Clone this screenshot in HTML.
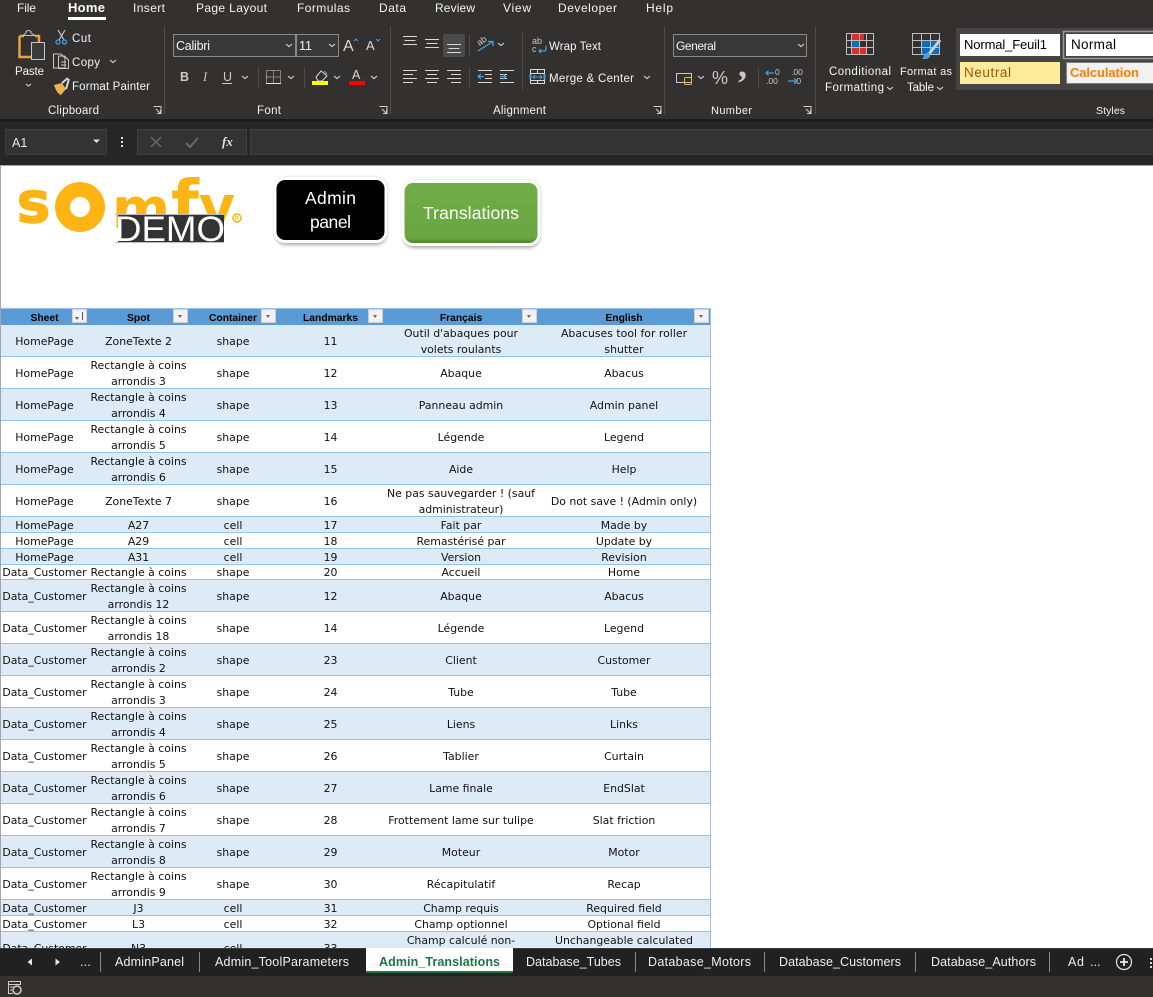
<!DOCTYPE html>
<html lang="en"><head><meta charset="utf-8"><title>Admin_Translations</title>
<style>
html,body{margin:0;padding:0;background:#fff}
#p{position:relative;width:1153px;height:997px;overflow:hidden;background:#fff;font-family:"Liberation Sans",sans-serif}
svg{position:absolute;display:block}
svg text{font-family:"Liberation Sans",sans-serif}
#w{position:absolute;left:0;top:165px;width:1153px;height:783px;overflow:hidden;border-top:1px solid #a6a6a6;box-sizing:border-box;border-left:1px solid #a6a6a6}
table{display:block;position:absolute;left:0;top:142px;width:710px;box-sizing:border-box;border-right:1px solid #9bc2e6;font:10.9px/16px "DejaVu Sans",sans-serif;color:#111}
tbody{display:block}
tr{display:flex}
td,th{display:flex;flex:none;align-items:center;justify-content:center;padding:2px 0 0;text-align:center;overflow:hidden;box-sizing:border-box;box-shadow:inset 0 -1px 0 #9bc2e6;white-space:nowrap}
td:nth-child(1),th:nth-child(1){width:87px}
td:nth-child(2),th:nth-child(2){width:101px}
td:nth-child(3),th:nth-child(3){width:88px}
td:nth-child(4),th:nth-child(4){width:107px}
td:nth-child(5),th:nth-child(5){width:154px}
td:nth-child(6),th:nth-child(6){width:172px}
th{height:17px;background:#5b9bd5;font:bold 10.3px/15px "Liberation Sans",sans-serif;color:#000;position:relative;box-shadow:inset 0 1px 0 #9bc2e6;padding-top:3px}
th b{position:absolute;right:1px;top:1px;width:15px;height:14px;background:#f2f2f2;border:1px solid #d0d0d0;box-sizing:border-box}
th b:after{content:"";position:absolute;left:4px;top:5px;border:2.5px solid transparent;border-top:3px solid #666;border-bottom:0}
th b.s:before{content:"";position:absolute;left:9px;top:2px;width:1px;height:8px;background:#555}
th b.s:after{left:2px;top:7px}
tr.b td{background:#ddebf7}
tr.h32 td{height:32px}tr.h16 td{height:16px}tr.h15 td{height:15px;align-items:flex-start;padding-top:1px;line-height:14px}
</style></head><body><div id="p">

<svg style="left:0;top:0" width="1153" height="165" viewBox="0 0 1153 165">
<rect width="1153" height="165" fill="#262626"/>
<rect width="1153" height="119" fill="#323130"/>
<rect y="119" width="1153" height="3" fill="#1c1c1c"/>
<g fill="#f4f4f4" font-size="12">
<text x="17" y="12" textLength="19">File</text>
<text x="68" y="12" font-size="13" font-weight="bold" fill="#fff" textLength="37">Home</text>
<text x="133" y="12" textLength="32">Insert</text>
<text x="196" y="12" textLength="71">Page Layout</text>
<text x="297" y="12" textLength="53">Formulas</text>
<text x="379" y="12" textLength="27">Data</text>
<text x="435" y="12" textLength="40">Review</text>
<text x="503" y="12" textLength="28">View</text>
<text x="558" y="12" textLength="59">Developer</text>
<text x="646" y="12" textLength="27">Help</text>
</g>
<rect x="68" y="17" width="38" height="3" fill="#fff"/>
<g stroke="#4d4d4d"><path d="M164.500 26V114M390.500 26V114M664.500 26V114M815.500 26V114"/></g>

<!-- clipboard -->
<path d="M19.500 36H24M35 36H39V46" fill="none" stroke="#e8a33b" stroke-width="2.500"/>
<path d="M19.500 36V57H31" fill="none" stroke="#e8a33b" stroke-width="2.500"/>
<path d="M23 35.500L26 33V31.500Q28.500 29.500 31 31.500V33L35 35.500Z" fill="none" stroke="#c8c8c8"/>
<rect x="31.500" y="42.500" width="13" height="17" fill="#3a3a3a" stroke="#c8c8c8"/>
<g fill="#f4f4f4" font-size="11.500">
<text x="15" y="75" textLength="29">Paste</text>
<text x="72" y="42" textLength="19">Cut</text>
<text x="72" y="66" textLength="28">Copy</text>
<text x="72" y="90" textLength="78">Format Painter</text>
<text x="48" y="114" textLength="51">Clipboard</text>
<text x="257" y="114" textLength="24">Font</text>
<text x="493" y="114" textLength="53">Alignment</text>
<text x="711" y="114" font-size="11" textLength="41">Number</text>
<text x="1096" y="114" font-size="10.500" textLength="29">Styles</text>
</g>
<path d="M58 30L64 40M65 30L59 40" stroke="#c8c8c8" stroke-width="1.200" fill="none"/>
<circle cx="58" cy="42" r="2" fill="none" stroke="#4a9fdc" stroke-width="1.300"/><circle cx="64.500" cy="42" r="2" fill="none" stroke="#4a9fdc" stroke-width="1.300"/>
<path d="M59 68H53.500V54H61L65 58V68Z M58.500 56V68.500H68.500V60L64.500 56Z M61 62H66M61 65H66" fill="#323130" stroke="#c8c8c8"/>
<path d="M54 85L62 83L66 89L61 95Q57 94 54 85Z" fill="#eab054"/><path d="M62 83L68 78M66 89L69 79" stroke="#d8d8d8" stroke-width="2" fill="none"/>
<g fill="none" stroke="#cfcfcf"><path d="M153.500 106.500H161V114M156 109L160 113M157 113.500H160.500V110"/><path d="M379.500 106.500H387V114M382 109L386 113M383 113.500H386.500V110"/><path d="M653.500 106.500H661V114M656 109L660 113M657 113.500H660.500V110"/><path d="M803.500 106.500H811V114M806 109L810 113M807 113.500H810.500V110"/></g>

<!-- font -->
<rect x="173.500" y="34.500" width="122" height="22" fill="#383838" stroke="#8a8a8a"/>
<rect x="296.500" y="34.500" width="42" height="22" fill="#383838" stroke="#8a8a8a"/>
<text x="176" y="50" fill="#f4f4f4" font-size="12.500" textLength="34">Calibri</text>
<text x="299" y="50" fill="#f4f4f4" font-size="12.500">11</text>
<text x="343" y="51" fill="#d8d8d8" font-size="16">A</text><path d="M354 41L356 39L358 41" stroke="#4a9fdc" fill="none"/>
<text x="366" y="50" fill="#d8d8d8" font-size="13">A</text><path d="M376 39L378 41L380 39" stroke="#4a9fdc" fill="none"/>
<text x="180" y="81" fill="#c8c8c8" font-size="12.500" font-weight="bold">B</text>
<text x="203" y="81" fill="#c8c8c8" font-size="12.500" font-style="italic" style="font-family:'Liberation Serif',serif">I</text>
<text x="223" y="81" fill="#c8c8c8" font-size="12.500">U</text><path d="M222 83.500H232" stroke="#c8c8c8"/>
<path d="M258.500 67V88M304.500 67V88" stroke="#4d4d4d"/>
<path d="M266.500 70.500H280.500V83.500H266.500Z M273.500 70.500V83.500M266.500 77H280.500" fill="none" stroke="#d8d8d8" stroke-dasharray="1 1"/><path d="M266 83.500H281" stroke="#e8e8e8"/>
<path d="M316 77L321 71L327 76L322 81H318Z" fill="none" stroke="#d8d8d8"/><path d="M324 71L327 74" stroke="#4a9fdc" stroke-width="1.500"/>
<rect x="312" y="81" width="16" height="4" fill="#ff0"/>
<text x="352" y="79" fill="#d8d8d8" font-size="12.500">A</text><rect x="349" y="81" width="16" height="4" fill="#f00"/>

<!-- alignment -->
<g stroke="#d8d8d8" fill="none">
<path d="M403 36.500H417M404.500 40.500H415.500M403 44.500H417"/>
<path d="M425 39.500H439M426.500 43.500H437.500M425 47.500H439"/>
</g>
<rect x="443" y="34" width="22" height="23" fill="#4a4a4a"/>
<path d="M447 44.500H461M448.500 48.500H459.500M447 52.500H461" stroke="#d8d8d8"/>
<path d="M469.500 35V56M469.500 67V88M522.500 32V90" stroke="#4d4d4d"/>
<text x="477" y="45" fill="#c8c8c8" font-size="9" transform="rotate(-35 480 42)">ab</text>
<path d="M478 51L492 42M488 41.500H493V46" stroke="#4a9fdc" fill="none" stroke-width="1.300"/>
<g stroke="#d8d8d8" fill="none">
<path d="M403 70.500H417M403 74.500H413M403 78.500H417M403 82.500H413"/>
<path d="M425 70.500H439M427 74.500H437M425 78.500H439M427 82.500H437"/>
<path d="M447 70.500H461M451 74.500H461M447 78.500H461M451 82.500H461"/>
<path d="M478 70.500H492M485 74.500H492M485 78.500H492M478 82.500H492"/>
<path d="M500 70.500H514M500 74.500H507M500 78.500H507M500 82.500H514"/>
</g>
<path d="M484 76.500H478M481 74L478 76.500L481 79M500 76.500H506M503 74L506 76.500L503 79" stroke="#4a9fdc" fill="none" stroke-width="1.200"/>
<text x="532" y="44" fill="#c8c8c8" font-size="9">ab</text><text x="532" y="52" fill="#c8c8c8" font-size="9">c</text>
<path d="M546 46V49Q546 51 544 51H539M541 49L539 51L541 53" stroke="#4a9fdc" fill="none" stroke-width="1.200"/>
<text x="549" y="50" fill="#f4f4f4" font-size="11.500" textLength="52">Wrap Text</text>
<text x="549" y="82" fill="#f4f4f4" font-size="11.500" textLength="85">Merge &amp; Center</text>
<rect x="530.500" y="69.500" width="14" height="14" fill="none" stroke="#d8d8d8"/><path d="M530.500 74V79.500M544.500 74V79.500" stroke="#4a9fdc" stroke-width="2"/><path d="M530.500 73.500H544.500M530.500 80.500H544.500M537.500 69.500V73.500M537.500 80.500V83.500" stroke="#d8d8d8"/>
<path d="M533 77H542M535 75L533 77L535 79M540 75L542 77L540 79" stroke="#4a9fdc" fill="none"/>

<!-- number -->
<rect x="673.500" y="34.500" width="133" height="22" fill="#383838" stroke="#8a8a8a"/>
<text x="676" y="50" fill="#f4f4f4" font-size="12" textLength="40">General</text>
<rect x="676.500" y="73.500" width="15" height="9" fill="none" stroke="#c8c8c8"/><rect x="684.500" y="77.500" width="7" height="7" fill="none" stroke="#e8b454" rx="1"/>
<text x="712" y="84" fill="#c8c8c8" font-size="18">%</text>
<text x="738" y="77" fill="#c8c8c8" font-size="36" font-weight="bold" style="font-family:'Liberation Serif',serif">,</text>
<path d="M758.500 68V88" stroke="#4d4d4d"/>
<text x="766" y="84" fill="#c8c8c8" font-size="8.500">.00</text><text x="775" y="75" fill="#c8c8c8" font-size="8.500">0</text>
<path d="M766 73H774M768.500 70.500L766 73L768.500 75.500" stroke="#4a9fdc" fill="none" stroke-width="1.200"/>
<text x="791" y="75" fill="#c8c8c8" font-size="8.500">.00</text><text x="794" y="84" fill="#c8c8c8" font-size="8.500">.0</text>
<path d="M788 81H797M794 78.500L797 81L794 83.500" stroke="#4a9fdc" fill="none" stroke-width="1.200"/>

<!-- chevrons -->
<g fill="none" stroke="#d8d8d8" stroke-width="1.100">
<path d="M26 84L28.500 86L31 84"/><path d="M110 60L113 62.500L116 60"/>
<path d="M286 44L289 46.500L292 44"/><path d="M329 44L332 46.500L335 44"/>
<path d="M242 76L245 78.500L248 76"/><path d="M288 76L291 78.500L294 76"/><path d="M334 76L337 78.500L340 76"/><path d="M371 76L374 78.500L377 76"/>
<path d="M498 43L501 45.500L504 43"/><path d="M644 76L647 78.500L650 76"/><path d="M798 44L801 46.500L804 44"/><path d="M698 76L701 78.500L704 76"/>
<path d="M887 87L890 89.500L893 87"/><path d="M937 87L940 89.500L943 87"/>
</g>

<!-- conditional -->
<g transform="translate(846,33)">
<rect x=".5" y=".5" width="27" height="21" fill="none" stroke="#bdbdbd"/>
<rect x="6" y="1" width="12" height="6" fill="#e02d2d"/><rect x="6" y="8" width="8" height="6" fill="#0f6cbd"/><rect x="6" y="15" width="14" height="6" fill="#e02d2d"/>
<path d="M5.500 1V21M13.500 1V21M20.500 1V21M1 7.500H27M1 14.500H27" stroke="#bdbdbd" fill="none"/>
</g>
<g transform="translate(912,33)">
<rect x=".5" y=".5" width="27" height="21" fill="none" stroke="#bdbdbd"/>
<rect x="9" y="8" width="18" height="13" fill="#0f6cbd"/>
<path d="M9.500 1V21M18.500 1V21M1 7.500H27M1 14.500H27" stroke="#bdbdbd" fill="none"/>
<path d="M28 7L17 21" stroke="#cfcfcf" stroke-width="3"/>
<path d="M9 26Q11 26 12 22Q15 18 18 21Q19 25 14 26Z" fill="#4a9fdc"/>
</g>
<g fill="#f4f4f4" font-size="11.500">
<text x="829" y="75" textLength="62">Conditional</text>
<text x="825" y="91" textLength="59">Formatting</text>
<text x="900" y="75" font-size="11" textLength="52">Format as</text>
<text x="907" y="91" textLength="27">Table</text>
</g>

<!-- styles -->
<rect x="956" y="28" width="197" height="62" fill="#454545"/>
<rect x="960" y="34" width="100" height="22" fill="#fff"/>
<text x="964" y="49" font-size="13" fill="#000" textLength="83">Normal_Feuil1</text>
<rect x="1063.500" y="31.500" width="95" height="27" fill="none" stroke="#999" stroke-width="1.500"/>
<rect x="1066" y="34" width="92" height="22" fill="#fff"/>
<text x="1071" y="49" font-size="13.500" fill="#000" textLength="45">Normal</text>
<rect x="960" y="62" width="100" height="22" fill="#ffeb9c"/>
<text x="964" y="77" font-size="13.500" fill="#9c5700" textLength="47">Neutral</text>
<rect x="1066.500" y="62.500" width="92" height="21" fill="#f2f2f2" stroke="#7f7f7f"/>
<text x="1070" y="77" font-size="13" font-weight="bold" fill="#fa7d00" textLength="69">Calculation</text>

<!-- formula bar -->
<rect x="5.500" y="129.500" width="101" height="25" fill="#333" stroke="#3f3f3f"/>
<text x="12" y="147" fill="#e8e8e8" font-size="12.500">A1</text>
<path d="M93 139.500H100L96.500 143Z" fill="#e0e0e0"/>
<g fill="#e0e0e0"><rect x="121" y="137" width="2" height="2"/><rect x="121" y="141" width="2" height="2"/><rect x="121" y="145" width="2" height="2"/></g>
<rect x="137.500" y="129.500" width="109" height="25" fill="#333" stroke="#3f3f3f"/>
<path d="M151 137L161 147M161 137L151 147" stroke="#6a6a6a" stroke-width="1.500"/>
<path d="M186 143L190 147L198 138" stroke="#6a6a6a" stroke-width="2" fill="none"/>
<text x="222" y="146" fill="#e0e0e0" font-size="13" font-style="italic" font-weight="bold" style="font-family:'Liberation Serif',serif">fx</text>
<rect x="250.500" y="129.500" width="910" height="25" fill="#333" stroke="#3f3f3f"/>
</svg>

<div id="w">
<svg style="left:-1px;top:-166px" width="720" height="300" viewBox="0 0 720 300">
<defs>
<linearGradient id="g" x1="0" y1="0" x2="0" y2="1"><stop offset="0" stop-color="#70ad47"/><stop offset=".88" stop-color="#6aa742"/><stop offset="1" stop-color="#4f7f30"/></linearGradient>
<filter id="sh" x="-15%" y="-20%" width="130%" height="140%"><feGaussianBlur stdDeviation="1.800"/></filter>
</defs>
<g fill="#fdb515" font-weight="bold">
<text x="33.500" y="222" font-size="56" text-anchor="middle" stroke="#fdb515" stroke-width="1.500" stroke-linejoin="round" style="font-family:'DejaVu Sans',sans-serif">s</text>
<text x="141" y="228" font-size="56" text-anchor="middle" style="font-family:'DejaVu Sans',sans-serif">m</text>
<text x="185" y="226" font-size="64" text-anchor="middle" style="font-family:'DejaVu Sans',sans-serif">f</text>
<text x="217" y="226" font-size="56" text-anchor="middle" style="font-family:'DejaVu Sans',sans-serif">y</text>
</g>
<circle cx="80" cy="207" r="17.500" fill="none" stroke="#fdb515" stroke-width="15"/>
<rect x="118" y="215" width="106" height="27" fill="#333"/>
<path d="M115 214.500H224M115 242.500H224" stroke="#bbb"/>
<text x="115" y="241" font-size="35" fill="#fff" textLength="110" lengthAdjust="spacingAndGlyphs">DEMO</text>
<circle cx="237" cy="218" r="4" fill="none" stroke="#fdb515" stroke-width="1.500"/>
<text x="237" y="220" font-size="5.500" font-weight="bold" fill="#fdb515" text-anchor="middle">R</text>

<rect x="275" y="178" width="112" height="67" rx="11" fill="#777" opacity=".6" filter="url(#sh)"/>
<rect x="275" y="178.500" width="111" height="63" rx="10" fill="#000" stroke="#fff" stroke-width="3"/>
<text x="330.500" y="204" font-size="17.500" fill="#fff" text-anchor="middle" textLength="51">Admin</text>
<text x="330.500" y="228" font-size="17.500" fill="#fff" text-anchor="middle" textLength="41">panel</text>
<rect x="403" y="181" width="137" height="67" rx="11" fill="#777" opacity=".6" filter="url(#sh)"/>
<rect x="403" y="181.500" width="136" height="63" rx="10" fill="url(#g)" stroke="#fff" stroke-width="3"/>
<text x="471" y="219" font-size="17.500" fill="#fff" text-anchor="middle" textLength="96">Translations</text>
</svg>
<table>
<tr><th>Sheet<b class="s"></b></th><th>Spot<b></b></th><th>Container<b></b></th><th>Landmarks<b></b></th><th>Français<b></b></th><th>English<b></b></th></tr>
<tr class="b h32"><td>HomePage</td><td>ZoneTexte 2</td><td>shape</td><td>11</td><td>Outil d'abaques pour<br>volets roulants</td><td>Abacuses tool for roller<br>shutter</td></tr>
<tr class="h32"><td>HomePage</td><td>Rectangle à coins<br>arrondis 3</td><td>shape</td><td>12</td><td>Abaque</td><td>Abacus</td></tr>
<tr class="b h32"><td>HomePage</td><td>Rectangle à coins<br>arrondis 4</td><td>shape</td><td>13</td><td>Panneau admin</td><td>Admin panel</td></tr>
<tr class="h32"><td>HomePage</td><td>Rectangle à coins<br>arrondis 5</td><td>shape</td><td>14</td><td>Légende</td><td>Legend</td></tr>
<tr class="b h32"><td>HomePage</td><td>Rectangle à coins<br>arrondis 6</td><td>shape</td><td>15</td><td>Aide</td><td>Help</td></tr>
<tr class="h32"><td>HomePage</td><td>ZoneTexte 7</td><td>shape</td><td>16</td><td>Ne pas sauvegarder ! (sauf<br>administrateur)</td><td>Do not save ! (Admin only)</td></tr>
<tr class="b h16"><td>HomePage</td><td>A27</td><td>cell</td><td>17</td><td>Fait par</td><td>Made by</td></tr>
<tr class="h16"><td>HomePage</td><td>A29</td><td>cell</td><td>18</td><td>Remastérisé par</td><td>Update by</td></tr>
<tr class="b h16"><td>HomePage</td><td>A31</td><td>cell</td><td>19</td><td>Version</td><td>Revision</td></tr>
<tr class="h15"><td>Data_Customer</td><td>Rectangle à coins</td><td>shape</td><td>20</td><td>Accueil</td><td>Home</td></tr>
<tr class="b h32"><td>Data_Customer</td><td>Rectangle à coins<br>arrondis 12</td><td>shape</td><td>12</td><td>Abaque</td><td>Abacus</td></tr>
<tr class="h32"><td>Data_Customer</td><td>Rectangle à coins<br>arrondis 18</td><td>shape</td><td>14</td><td>Légende</td><td>Legend</td></tr>
<tr class="b h32"><td>Data_Customer</td><td>Rectangle à coins<br>arrondis 2</td><td>shape</td><td>23</td><td>Client</td><td>Customer</td></tr>
<tr class="h32"><td>Data_Customer</td><td>Rectangle à coins<br>arrondis 3</td><td>shape</td><td>24</td><td>Tube</td><td>Tube</td></tr>
<tr class="b h32"><td>Data_Customer</td><td>Rectangle à coins<br>arrondis 4</td><td>shape</td><td>25</td><td>Liens</td><td>Links</td></tr>
<tr class="h32"><td>Data_Customer</td><td>Rectangle à coins<br>arrondis 5</td><td>shape</td><td>26</td><td>Tablier</td><td>Curtain</td></tr>
<tr class="b h32"><td>Data_Customer</td><td>Rectangle à coins<br>arrondis 6</td><td>shape</td><td>27</td><td>Lame finale</td><td>EndSlat</td></tr>
<tr class="h32"><td>Data_Customer</td><td>Rectangle à coins<br>arrondis 7</td><td>shape</td><td>28</td><td>Frottement lame sur tulipe</td><td>Slat friction</td></tr>
<tr class="b h32"><td>Data_Customer</td><td>Rectangle à coins<br>arrondis 8</td><td>shape</td><td>29</td><td>Moteur</td><td>Motor</td></tr>
<tr class="h32"><td>Data_Customer</td><td>Rectangle à coins<br>arrondis 9</td><td>shape</td><td>30</td><td>Récapitulatif</td><td>Recap</td></tr>
<tr class="b h16"><td>Data_Customer</td><td>J3</td><td>cell</td><td>31</td><td>Champ requis</td><td>Required field</td></tr>
<tr class="h16"><td>Data_Customer</td><td>L3</td><td>cell</td><td>32</td><td>Champ optionnel</td><td>Optional field</td></tr>
<tr class="b h32"><td>Data_Customer</td><td>N3</td><td>cell</td><td>33</td><td>Champ calculé non-<br>modifiable</td><td>Unchangeable calculated<br>field</td></tr>
</table>
</div>

<svg style="left:0;top:948px" width="1153" height="49" viewBox="0 0 1153 49">
<rect width="1153" height="28" fill="#212121"/>
<rect y="0" width="1153" height="1" fill="#3a3a3a"/>
<rect y="28" width="1153" height="21" fill="#323130"/>
<path d="M32 10.500L27.500 14L32 17.500Z M55.500 10.500L60 14L55.500 17.500Z" fill="#e8e8e8"/>
<text x="80" y="18" fill="#e8e8e8" font-size="13">...</text>
<path d="M100.500 4V24M199.500 4V24M635.500 4V24M764.500 4V24M915.500 4V24M1049.500 4V24" stroke="#8a8a8a"/>
<rect x="366" y="0" width="147" height="23" fill="#fff"/>
<rect x="366" y="23" width="147" height="2" fill="#217346"/>
<g fill="#f0f0f0" font-size="12.500">
<text x="115" y="18" textLength="69">AdminPanel</text>
<text x="215" y="18" textLength="134">Admin_ToolParameters</text>
<text x="526" y="18" textLength="95">Database_Tubes</text>
<text x="648" y="18" textLength="103">Database_Motors</text>
<text x="779" y="18" textLength="122">Database_Customers</text>
<text x="931" y="18" textLength="105">Database_Authors</text>
<text x="1068" y="18" textLength="16">Ad</text>
<text x="1090" y="18">...</text>
</g>
<text x="379" y="18" font-size="12.500" font-weight="bold" fill="#217346" textLength="121">Admin_Translations</text>
<circle cx="1124" cy="14" r="7.500" fill="none" stroke="#e8e8e8" stroke-width="1.200"/>
<path d="M1120 14H1128M1124 10V18" stroke="#e8e8e8" stroke-width="1.800"/>
<g fill="#d8d8d8"><rect x="1150" y="10" width="2" height="2"/><rect x="1150" y="14" width="2" height="2"/><rect x="1150" y="18" width="2" height="2"/></g>
<path d="M8.500 33.500H20.500V37M8.500 33.500V45.500H13M8.500 36.500H20.500M10 39H13M10 42H12" fill="none" stroke="#cfcfcf"/>
<circle cx="17" cy="42" r="4" fill="none" stroke="#cfcfcf" stroke-width="1.500"/>
</svg>
</div></body></html>
